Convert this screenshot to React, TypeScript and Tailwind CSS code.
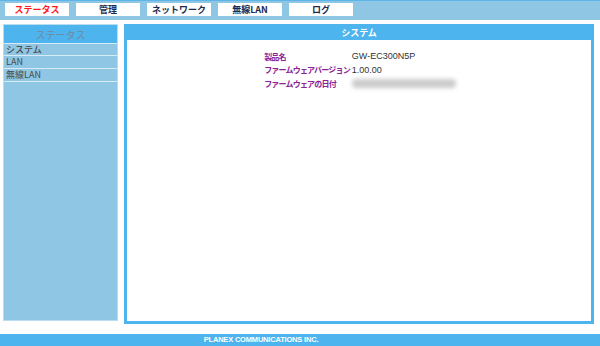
const tabs = [
  { label: "ステータス", active: true },
  { label: "管理" },
  { label: "ネットワーク" },
  { label: "無線LAN" },
  { label: "ログ" },
];

const menu = ["システム", "LAN", "無線LAN"];

const jp = { fontFamily: '"Noto Sans CJK JP", "Liberation Sans", sans-serif' };
const latin = { fontFamily: '"Liberation Sans", sans-serif' };

export default function App() {
  return (
    <div className="w-[600px] h-[346px] bg-white flex flex-col overflow-hidden" style={jp}>
      {/* top tabs */}
      <div className="h-[20px] bg-[#8ec6e4] border-t border-[#5cb5e8] flex items-start pt-[2px] pl-[5px] gap-[7px]">
        {tabs.map((t) => (
          <div
            key={t.label}
            className={`w-[64px] h-[13px] bg-white flex items-center justify-center text-[9px] leading-none font-bold ${
              t.active ? "text-[#ff1a1a]" : "text-[#1c2a4e]"
            }`}
          >
            {t.label}
          </div>
        ))}
      </div>

      <div className="flex flex-1 pt-[4px] pl-[3px] pr-[6px] gap-[6px]">
        {/* sidebar */}
        <div className="w-[115px] h-[297px] bg-[#8ec6e4] border border-[#b9dcef] flex flex-col">
          <div className="h-[18px] bg-[#4db4ee] flex items-center justify-center text-[10px] text-[#74889e]">
            ステータス
          </div>
          {menu.map((m, i) => (
            <div
              key={m}
              className={`h-[13px] flex items-center pl-[2px] text-[9px] leading-[12px] overflow-hidden border-b border-[#d6ebf6] text-[#4a4a4a] ${
                i === 0 ? "border-t font-medium" : ""
              }`}
            >
              {m}
            </div>
          ))}
        </div>

        {/* main panel */}
        <div className="flex-1 h-[300px] bg-[#4db4ee] border-[3px] border-t-0 border-[#4db4ee] flex flex-col">
          <div className="h-[16px] flex items-center justify-center text-white text-[9px] font-bold leading-none">
            システム
          </div>
          <div className="flex-1 bg-white flex justify-center pt-[10px]">
            <table className="h-fit border-separate border-spacing-x-[2px] border-spacing-y-0 ml-[2px]">
              <tbody>
                <tr className="h-[13.5px]">
                  <td className="text-[8px] font-bold text-[#8b2296] leading-none tracking-[-0.8px]">製品名</td>
                  <td className="text-[9px] text-[#333] leading-none" style={latin}>GW-EC300N5P</td>
                </tr>
                <tr className="h-[13.5px]">
                  <td className="text-[8px] font-bold text-[#8b2296] leading-none tracking-[-0.8px]">ファームウェアバージョン</td>
                  <td className="text-[9px] text-[#333] leading-none" style={latin}>1.00.00</td>
                </tr>
                <tr className="h-[13.5px]">
                  <td className="text-[8px] font-bold text-[#8b2296] leading-none tracking-[-0.8px]">ファームウェアの日付</td>
                  <td className="leading-none">
                    <span className="block w-[104px] h-[9px] bg-[#cccccc] blur-[2px] rounded-sm" />
                  </td>
                </tr>
              </tbody>
            </table>
          </div>
        </div>
      </div>

      {/* footer */}
      <div className="h-[12px] mt-[10px] bg-[#4db4ee] flex items-center justify-center pr-[78px] text-white text-[7.5px] font-bold leading-none tracking-tight" style={latin}>
        PLANEX COMMUNICATIONS INC.
      </div>
    </div>
  );
}
